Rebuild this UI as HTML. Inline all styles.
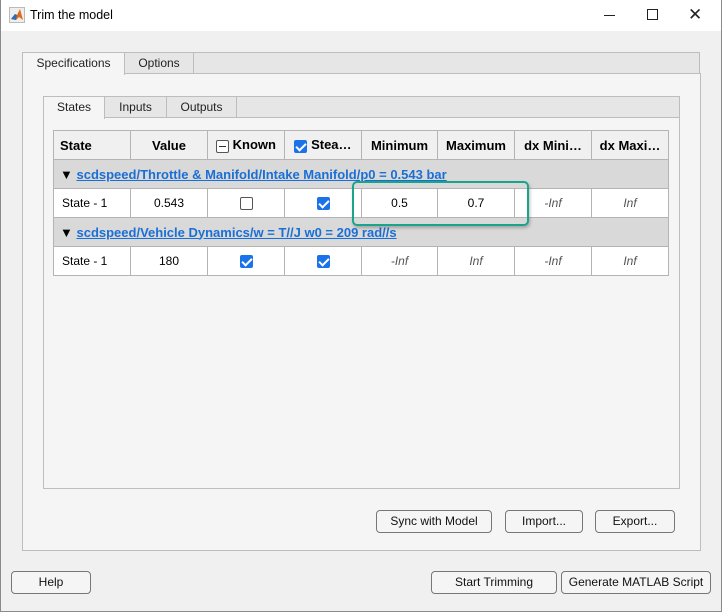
<!DOCTYPE html>
<html><head><style>
*{box-sizing:border-box;margin:0;padding:0}
body{width:722px;height:612px;overflow:hidden;background:#fff;font-family:"Liberation Sans",Arial,sans-serif;font-size:12px;color:#000;position:relative}
.abs{position:absolute}
.win{left:0;top:0;width:722px;height:612px;border:1px solid #8a8a8a;border-top:none}
.body{left:1px;top:31px;width:720px;height:580px;background:#f0f0f0}
.tab{position:absolute;height:22px;border:1px solid #bdbdbd;background:#e6e6e6;line-height:20px;text-align:center;color:#222}
.tab.sel{background:#f5f5f5;border-bottom:none;height:23px}
.panel{position:absolute;border:1px solid #bdbdbd;background:#f5f5f5}
table{position:absolute;left:53px;top:130px;border-collapse:collapse;background:#fff}
td{border:1px solid #b4b4b4;height:29px;text-align:center;font-size:12px;padding:0}
tr.h td{background:#f0f0f0;font-weight:bold;font-size:13px}
tr.g td{background:#d9d9d9;text-align:left;padding-left:6px;font-weight:bold;font-size:13px}
tr.g a{color:#1a6fd6;text-decoration:underline}
.it{font-style:italic;color:#555}
.cb{display:inline-block;width:13px;height:13px;border:1px solid #555;border-radius:2px;vertical-align:middle;background:#fff}
.cbk{display:inline-block;width:13px;height:13px;border-radius:2px;background:#1a73e8;vertical-align:middle;position:relative}
.cbk:after{content:"";position:absolute;left:4px;top:1px;width:4px;height:8px;border:solid #fff;border-width:0 2px 2px 0;transform:rotate(45deg)}
.btn{position:absolute;height:23px;border:1px solid #777;border-radius:4px;background:#f5f5f5;text-align:center;line-height:21px;font-size:12px;color:#111}
</style></head><body>
<div class="abs win"></div>
<div class="abs" style="left:9px;top:7px;width:16px;height:16px;border:1px solid #bbb;background:#eee">
<svg width="14" height="14" viewBox="0 0 14 14"><path d="M1 11 L5 6 L7 7 L10 1 L13 12 L9 9 L6 12 Z" fill="#e06a1a"/><path d="M1 11 L5 6 L7 7 L6 12Z" fill="#2a6fb8"/></svg></div>
<div class="abs" style="left:30px;top:8px;font-size:12.5px">Trim the model</div>
<div class="abs" style="left:604px;top:15px;width:11px;height:1px;background:#222"></div>
<div class="abs" style="left:647px;top:9px;width:11px;height:11px;border:1px solid #222"></div>
<div class="abs" style="left:688px;top:5px;font-size:17px;color:#222">✕</div>
<div class="abs body"></div>

<div class="panel" style="left:22px;top:73px;width:679px;height:478px"></div>
<div class="tab" style="left:193px;top:52px;width:507px;border-left:1px solid #bdbdbd"></div>
<div class="tab" style="left:124px;top:52px;width:70px">Options</div>
<div class="tab sel" style="left:22px;top:52px;width:103px">Specifications</div>

<div class="panel" style="left:43px;top:117px;width:637px;height:372px"></div>
<div class="tab" style="left:236px;top:96px;width:444px"></div>
<div class="tab" style="left:166px;top:96px;width:71px">Outputs</div>
<div class="tab" style="left:104px;top:96px;width:63px">Inputs</div>
<div class="tab sel" style="left:43px;top:96px;width:62px">States</div>

<table>
<colgroup><col style="width:77px"><col style="width:77px"><col style="width:77px"><col style="width:77px"><col style="width:76px"><col style="width:77px"><col style="width:77px"><col style="width:77px"></colgroup>
<tr class="h"><td style="text-align:left;padding-left:6px">State</td><td>Value</td><td><span class="cb" style="position:relative"><span style="position:absolute;left:2px;top:5px;width:7px;height:1.5px;background:#333"></span></span> Known</td><td><span class="cbk"></span> Stea…</td><td>Minimum</td><td>Maximum</td><td>dx Mini…</td><td>dx Maxi…</td></tr>
<tr class="g"><td colspan="8">▼ <a>scdspeed/Throttle &amp; Manifold/Intake Manifold/p0 = 0.543 bar</a></td></tr>
<tr><td style="text-align:left;padding-left:8px">State - 1</td><td>0.543</td><td><span class="cb"></span></td><td><span class="cbk"></span></td><td>0.5</td><td>0.7</td><td class="it">-Inf</td><td class="it">Inf</td></tr>
<tr class="g"><td colspan="8">▼ <a>scdspeed/Vehicle Dynamics/w = T//J w0 = 209 rad//s</a></td></tr>
<tr><td style="text-align:left;padding-left:8px">State - 1</td><td>180</td><td><span class="cbk"></span></td><td><span class="cbk"></span></td><td class="it">-Inf</td><td class="it">Inf</td><td class="it">-Inf</td><td class="it">Inf</td></tr>
</table>
<div class="abs" style="left:352px;top:181px;width:177px;height:45px;border:2.5px solid #1aa58a;border-radius:5px;box-shadow:1px 2px 3px rgba(0,0,0,.25)"></div>

<div class="btn" style="left:376px;top:510px;width:116px">Sync with Model</div>
<div class="btn" style="left:505px;top:510px;width:78px">Import...</div>
<div class="btn" style="left:595px;top:510px;width:80px">Export...</div>
<div class="btn" style="left:11px;top:571px;width:80px">Help</div>
<div class="btn" style="left:431px;top:571px;width:126px">Start Trimming</div>
<div class="btn" style="left:561px;top:571px;width:150px">Generate MATLAB Script</div>
</body></html>
